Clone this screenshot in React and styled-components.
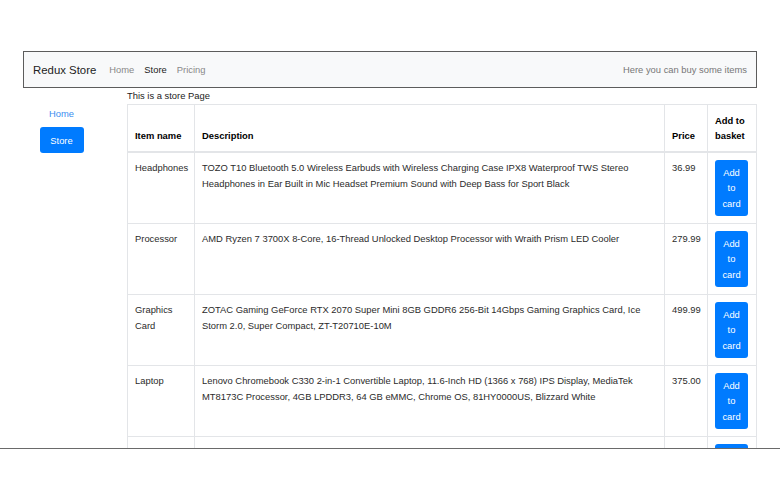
import React from "react";
import styled, { createGlobalStyle } from "styled-components";

const items = [
  {
    name: "Headphones",
    description:
      "TOZO T10 Bluetooth 5.0 Wireless Earbuds with Wireless Charging Case IPX8 Waterproof TWS Stereo Headphones in Ear Built in Mic Headset Premium Sound with Deep Bass for Sport Black",
    price: "36.99",
  },
  {
    name: "Processor",
    description:
      "AMD Ryzen 7 3700X 8-Core, 16-Thread Unlocked Desktop Processor with Wraith Prism LED Cooler",
    price: "279.99",
  },
  {
    name: "Graphics Card",
    description:
      "ZOTAC Gaming GeForce RTX 2070 Super Mini 8GB GDDR6 256-Bit 14Gbps Gaming Graphics Card, Ice Storm 2.0, Super Compact, ZT-T20710E-10M",
    price: "499.99",
  },
  {
    name: "Laptop",
    description:
      "Lenovo Chromebook C330 2-in-1 Convertible Laptop, 11.6-Inch HD (1366 x 768) IPS Display, MediaTek MT8173C Processor, 4GB LPDDR3, 64 GB eMMC, Chrome OS, 81HY0000US, Blizzard White",
    price: "375.00",
  },
];

function App() {
  return (
    <>
      <GlobalStyle />
      <Screen>
        <Navbar>
          <Brand>Redux Store</Brand>
          <NavLinks>
            <NavLink>Home</NavLink>
            <NavLink active>Store</NavLink>
            <NavLink>Pricing</NavLink>
          </NavLinks>
          <NavText>Here you can buy some items</NavText>
        </Navbar>
        <Body>
          <Sidebar>
            <SideLink>Home</SideLink>
            <SideButton>Store</SideButton>
          </Sidebar>
          <Main>
            <Caption>This is a store Page</Caption>
            <Table>
              <colgroup>
                <col style={{ width: 67 }} />
                <col style={{ width: 470 }} />
                <col style={{ width: 43 }} />
                <col style={{ width: 49 }} />
              </colgroup>
              <thead>
                <tr>
                  <Th>Item name</Th>
                  <Th>Description</Th>
                  <Th>Price</Th>
                  <Th>Add to basket</Th>
                </tr>
              </thead>
              <tbody>
                {items.map((item) => (
                  <tr key={item.name}>
                    <Td>{item.name}</Td>
                    <Td>{item.description}</Td>
                    <Td>{item.price}</Td>
                    <Td>
                      <AddButton>Add to card</AddButton>
                    </Td>
                  </tr>
                ))}
                {/* next row, cut off by the bottom edge of the screenshot */}
                <tr>
                  <Td />
                  <Td />
                  <Td />
                  <Td>
                    <AddButton aria-label="Add to card" />
                  </Td>
                </tr>
              </tbody>
            </Table>
          </Main>
        </Body>
      </Screen>
    </>
  );
}

export default App;

const GlobalStyle = createGlobalStyle`
  body {
    margin: 0;
    background: #fff;
    font-family: "Liberation Sans", Arial, sans-serif;
    color: #212529;
  }
`;

const Screen = styled.div`
  box-sizing: border-box;
  height: 449px;
  padding: 51px 23px 0;
  border-bottom: 1px solid #6a6a6a;
  overflow: hidden;
`;

const Navbar = styled.nav`
  box-sizing: border-box;
  height: 37px;
  display: flex;
  align-items: center;
  padding: 0 9px;
  background: #f8f9fa;
  border: 1px solid #5c5c5c;
`;

const Brand = styled.span`
  font-size: 11.4px;
  color: #222;
  margin-right: 13px;
`;

const NavLinks = styled.div`
  display: flex;
  gap: 10px;
`;

const NavLink = styled.span`
  font-size: 9.4px;
  color: ${({ active }) => (active ? "#222" : "#888")};
`;

const NavText = styled.span`
  margin-left: auto;
  font-size: 9.4px;
  color: #777;
`;

const Body = styled.div`
  display: flex;
`;

const Sidebar = styled.div`
  width: 78px;
  margin-right: 27px;
  padding-top: 18px;
  display: flex;
  flex-direction: column;
  align-items: center;
`;

const SideLink = styled.span`
  font-size: 9.4px;
  line-height: 16px;
  color: #3a8ef0;
  margin-bottom: 5px;
`;

const SideButton = styled.button`
  width: 44px;
  height: 26px;
  border: none;
  border-radius: 3px;
  background: #007bff;
  color: #fff;
  font-family: inherit;
  font-size: 9.4px;
  padding: 0;
`;

const Main = styled.div`
  flex: 1;
`;

const Caption = styled.div`
  font-size: 9.4px;
  line-height: 16px;
  color: #222;
`;

const Table = styled.table`
  width: 629px;
  table-layout: fixed;
  border-collapse: collapse;
  font-size: 9.4px;
`;

const Th = styled.th`
  text-align: left;
  vertical-align: bottom;
  padding: 8px 7px;
  line-height: 15px;
  height: 30px;
  color: #000;
  font-weight: bold;
  border: 1px solid #e3e5e8;
  border-bottom-width: 2px;
`;

const Td = styled.td`
  vertical-align: top;
  padding: 7px;
  line-height: 16px;
  color: #2b2b2b;
  border: 1px solid #e3e5e8;
`;

const AddButton = styled.button`
  display: block;
  width: 33px;
  height: 56px;
  padding: 0 5px;
  border: none;
  border-radius: 3px;
  background: #007bff;
  color: #fff;
  font-family: inherit;
  font-size: 9.4px;
  line-height: 15.5px;
  text-align: center;
`;
